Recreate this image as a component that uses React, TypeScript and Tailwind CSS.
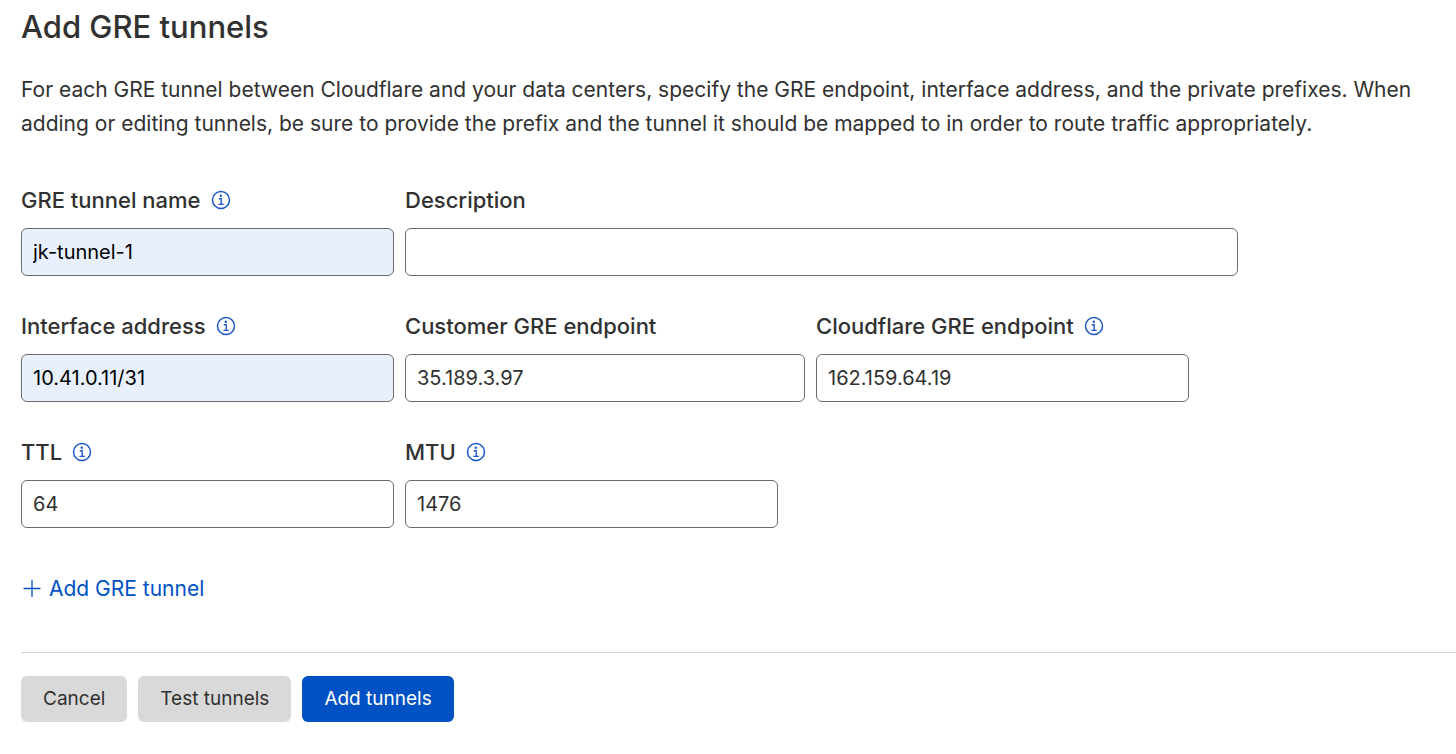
import { useId, useState } from 'react';

type FieldProps = {
  label: string;
  value?: string;
  info?: boolean;
  filled?: boolean;
  className?: string;
};

function InfoIcon() {
  return (
    <svg viewBox="0 0 20 20" className="size-5" fill="none" aria-hidden="true">
      <circle cx="10" cy="10" r="8.5" stroke="currentColor" strokeWidth="1.5" />
      <circle cx="9.8" cy="5.8" r="1.2" fill="currentColor" />
      <path d="M7.8 8.7h2.4v5.6M7.4 14.4h5.4" stroke="currentColor" strokeWidth="1.4" />
    </svg>
  );
}

function Field({ label, value = '', info, filled, className = 'w-[373px]' }: FieldProps) {
  const id = useId();
  const [text, setText] = useState(value);

  return (
    <div className={className}>
      <div className="flex items-center gap-[10px] h-8 mb-3">
        <label htmlFor={id} className="text-[22px] leading-8 font-medium">
          {label}
        </label>
        {info && (
          <button type="button" aria-label={`About ${label}`} className="text-[#1f57cb]">
            <InfoIcon />
          </button>
        )}
      </div>
      <input
        id={id}
        type="text"
        value={text}
        onChange={(e) => setText(e.target.value)}
        className={`block w-full h-12 px-[11px] border border-[#6b6b6b] rounded-md text-[20px] ${
          filled ? 'bg-[#e8f0fe] text-black' : 'bg-white'
        }`}
      />
    </div>
  );
}

export default function App() {
  return (
    <main className="min-h-screen bg-white pl-[21px] text-[#313131] font-['Inter',sans-serif]">
      <h1 className="pt-[5px] text-[31px] leading-11 font-medium">Add GRE tunnels</h1>
      <p className="mt-6 pr-5 text-[21px] leading-[34px]">
        For each GRE tunnel between Cloudflare and your data centers, specify the GRE endpoint, interface
        address, and the private prefixes. When adding or editing tunnels, be sure to provide the prefix and the
        tunnel it should be mapped to in order to route traffic appropriately.
      </p>

      <form onSubmit={(e) => e.preventDefault()}>
        <div className="mt-[43px] flex flex-col gap-[34px]">
          <div className="flex gap-[11px]">
            <Field label="GRE tunnel name" value="jk-tunnel-1" info filled />
            <Field label="Description" className="w-[833px]" />
          </div>
          <div className="flex gap-[11px]">
            <Field label="Interface address" value="10.41.0.11/31" info filled />
            <Field label="Customer GRE endpoint" value="35.189.3.97" className="w-[400px]" />
            <Field label="Cloudflare GRE endpoint" value="162.159.64.19" info />
          </div>
          <div className="flex gap-[11px]">
            <Field label="TTL" value="64" info />
            <Field label="MTU" value="1476" info />
          </div>
        </div>

        <button type="button" className="mt-[45px] flex items-center gap-2 text-[21px] leading-8 text-[#0051c3]">
          <svg viewBox="0 0 20 20" className="size-5" fill="none" stroke="currentColor" strokeWidth="1.3" aria-hidden="true">
            <path d="M11 1v17M2.5 9.5h17" />
          </svg>
          Add GRE tunnel
        </button>

        <div className="mt-[47px] flex gap-[11px] border-t border-[#d5d5d5] pt-[23px] text-[19px]">
          <button type="button" className="h-[46px] px-[22px] rounded-md bg-[#d9d9d9]">Cancel</button>
          <button type="button" className="h-[46px] px-[22px] rounded-md bg-[#d9d9d9]">Test tunnels</button>
          <button type="submit" className="h-[46px] px-[22px] rounded-md bg-[#0051c3] text-white">Add tunnels</button>
        </div>
      </form>
    </main>
  );
}
